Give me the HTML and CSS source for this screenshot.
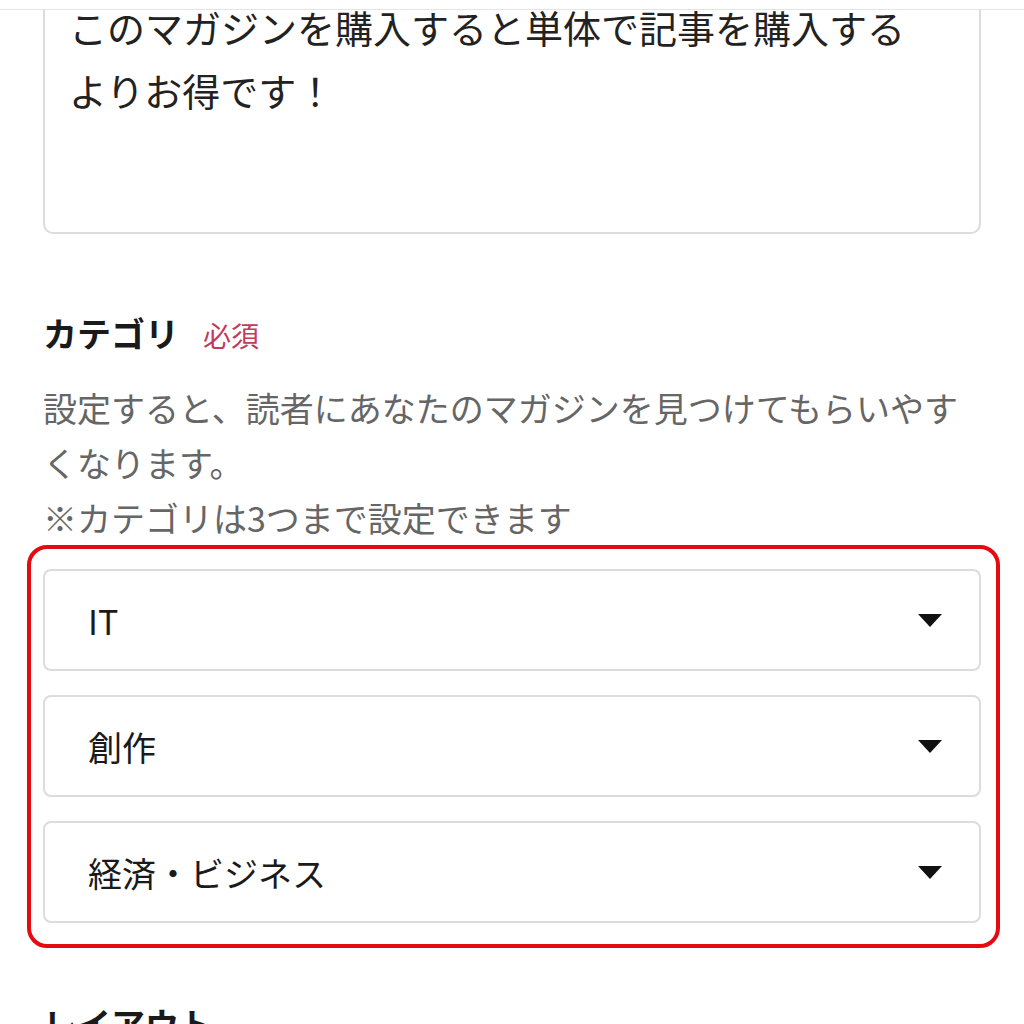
FILE: index.html
```html
<!DOCTYPE html>
<html lang="ja">
<head>
<meta charset="utf-8">
<title>マガジン設定</title>
<link rel="stylesheet" href="styles.css">
</head>
<body>
<div class="topbar"></div>
<main class="main">
  <div class="textarea">このマガジンを購入すると単体で記事を購入する<br>よりお得です！</div>

  <section class="field">
    <h2 class="label">カテゴリ<span class="required">必須</span></h2>
    <p class="desc">設定すると、読者にあなたのマガジンを見つけてもらいやすくなります。<br>※カテゴリは3つまで設定できます</p>
    <div class="highlight">
      <div class="select"><span>IT</span><svg class="caret" viewBox="0 0 24 13"><path d="M0 0H24L12 13Z"/></svg></div>
      <div class="select"><span>創作</span><svg class="caret" viewBox="0 0 24 13"><path d="M0 0H24L12 13Z"/></svg></div>
      <div class="select"><span>経済・ビジネス</span><svg class="caret" viewBox="0 0 24 13"><path d="M0 0H24L12 13Z"/></svg></div>
    </div>
  </section>

  <section class="field next">
    <h2 class="label">レイアウト</h2>
  </section>
</main>
</body>
</html>
```
FILE: styles.css
```css
html, body {
  margin: 0;
  padding: 0;
  background: #fff;
}
body {
  font-family: "Noto Sans CJK JP", "Noto Sans", sans-serif;
  color: #222;
  overflow: hidden;
  height: 1024px;
}
.topbar {
  position: fixed;
  top: 0;
  left: 0;
  right: 0;
  height: 9px;
  background: #fff;
  border-bottom: 1px solid #e4e4e4;
  z-index: 2;
}
.main {
  padding: 0 43px;
}
.textarea {
  margin-top: -5px;
  border: 2px solid #dcdcdc;
  border-top: none;
  border-radius: 0 0 10px 10px;
  padding: 0 24px 111px 24px;
  font-size: 38px;
  line-height: 63px;
  color: #222;
}
.field {
  margin-top: 75px;
}
.label {
  margin: 0;
  font-size: 34px;
  line-height: 48px;
  font-weight: 700;
  color: #1a1a1a;
  display: flex;
  align-items: baseline;
}
.required {
  font-size: 28px;
  font-weight: 400;
  color: #c23a5b;
  margin-left: 24px;
}
.desc {
  margin: 21px 0 0 0;
  font-size: 34px;
  line-height: 55px;
  color: #666;
}
.highlight {
  margin: 0 -19px 0 -16px;
  border: 4px solid #e60b10;
  border-radius: 20px;
  padding: 20px 15px 21px 12px;
  display: flex;
  flex-direction: column;
  gap: 24px;
}
.select {
  height: 102px;
  box-sizing: border-box;
  border: 2px solid #dcdcdc;
  border-radius: 8px;
  padding: 0 37px 0 43px;
  display: flex;
  align-items: center;
  justify-content: space-between;
  font-size: 34px;
  color: #1a1a1a;
}
.caret {
  width: 24px;
  height: 13px;
  fill: #111;
}
.next {
  margin-top: 52px;
}
```
